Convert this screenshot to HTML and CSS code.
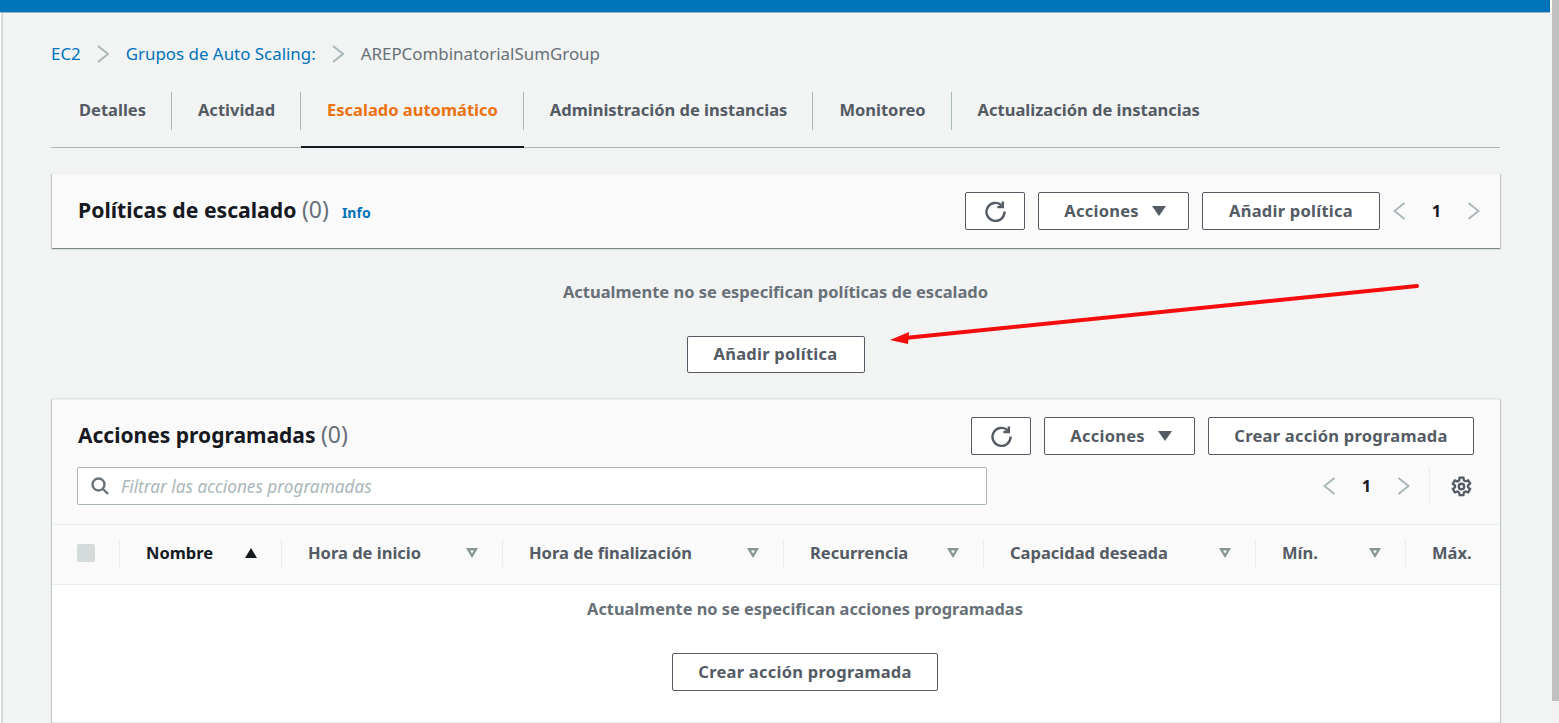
FILE: index.html
```html
<!DOCTYPE html>
<html lang="es">
<head>
    <meta charset="UTF-8">
    <title>AREPCombinatorialSumGroup</title>
    <link rel="stylesheet" href="styles.css">
</head>
<body>
    <div class="window">
        <div class="topbar"></div>
        <div class="page">
            <main class="content">
                <nav class="breadcrumb">
                    <a href="#">EC2</a>
                    <svg class="crumb-sep" viewBox="0 0 12 18"><path d="M1 1 11 9 1 17"/></svg>
                    <a href="#">Grupos de Auto Scaling:</a>
                    <svg class="crumb-sep" viewBox="0 0 12 18"><path d="M1 1 11 9 1 17"/></svg>
                    <span>AREPCombinatorialSumGroup</span>
                </nav>

                <ul class="tabs">
                    <li class="tab first">Detalles</li>
                    <li class="tab">Actividad</li>
                    <li class="tab active">Escalado automático</li>
                    <li class="tab">Administración de instancias</li>
                    <li class="tab">Monitoreo</li>
                    <li class="tab">Actualización de instancias</li>
                </ul>

                <!-- Politicas -->
                <section class="policy-panel">
                    <h2 class="panel-title">Políticas de escalado <span class="count">(0)</span></h2>
                    <a class="info" href="#">Info</a>
                    <div class="actions">
                        <button class="btn icon-btn">
                            <svg class="icon" viewBox="0 0 20 20"><path d="M16 4.2A8.6 8.6 0 1 0 18.6 10"/><path d="M17 .5v5.2h-5.2"/></svg>
                        </button>
                        <button class="btn dropdown-btn">Acciones <span class="caret"></span></button>
                        <button class="btn add-btn">Añadir política</button>
                        <div class="pager">
                            <svg class="page-arrow" viewBox="0 0 12 18"><path d="M11 1 1 9l10 8"/></svg>
                            <span class="page-num">1</span>
                            <svg class="page-arrow" viewBox="0 0 12 18"><path d="M1 1 11 9 1 17"/></svg>
                        </div>
                    </div>
                </section>
                <div class="empty policy-empty">
                    <p>Actualmente no se especifican políticas de escalado</p>
                    <button class="btn add-btn">Añadir política</button>
                </div>

                <!-- Acciones programadas -->
                <section class="table-panel">
                    <div class="table-head">
                        <div class="head-row">
                            <h2 class="panel-title">Acciones programadas <span class="count">(0)</span></h2>
                            <div class="actions">
                                <button class="btn icon-btn">
                                    <svg class="icon" viewBox="0 0 20 20"><path d="M16 4.2A8.6 8.6 0 1 0 18.6 10"/><path d="M17 .5v5.2h-5.2"/></svg>
                                </button>
                                <button class="btn dropdown-btn">Acciones <span class="caret"></span></button>
                                <button class="btn create-btn">Crear acción programada</button>
                            </div>
                        </div>
                        <div class="filter-row">
                            <div class="filter">
                                <svg class="search-icon" viewBox="0 0 18 18"><circle cx="7.5" cy="7.5" r="6"/><path d="m12 12 5 5"/></svg>
                                <input type="text" placeholder="Filtrar las acciones programadas">
                            </div>
                            <div class="pager table-pager">
                                <svg class="page-arrow" viewBox="0 0 12 18"><path d="M11 1 1 9l10 8"/></svg>
                                <span class="page-num">1</span>
                                <svg class="page-arrow" viewBox="0 0 12 18"><path d="M1 1 11 9 1 17"/></svg>
                            </div>
                            <div class="settings">
                                <svg class="gear" viewBox="0 0 20 20">
                                    <path d="M8.2 1.5h3.6l.5 2.6 1.6.9 2.5-.9 1.8 3.1-2 1.7v1.9l2 1.7-1.8 3.1-2.5-.9-1.6.9-.5 2.6H8.2l-.5-2.6-1.6-.9-2.5.9-1.8-3.1 2-1.7V9.1l-2-1.7 1.8-3.1 2.5.9 1.6-.9z"/>
                                    <circle cx="10" cy="10" r="2.6"/>
                                </svg>
                            </div>
                        </div>
                    </div>
                    <div class="columns">
                        <div class="col col-check"><span class="checkbox"></span></div>
                        <div class="col col-name">Nombre <span class="sort-up"></span></div>
                        <div class="col col-start">Hora de inicio <span class="sort-down"></span></div>
                        <div class="col col-end">Hora de finalización <span class="sort-down"></span></div>
                        <div class="col col-rec">Recurrencia <span class="sort-down"></span></div>
                        <div class="col col-cap">Capacidad deseada <span class="sort-down"></span></div>
                        <div class="col col-min">Mín. <span class="sort-down"></span></div>
                        <div class="col col-max">Máx.</div>
                    </div>
                    <div class="empty table-empty">
                        <p>Actualmente no se especifican acciones programadas</p>
                        <button class="btn create-btn">Crear acción programada</button>
                    </div>
                </section>
            </main>
        </div>
    </div>
    <div class="scrollbar"><div class="thumb"></div></div>

    <!-- flecha roja -->
    <svg class="annotation" viewBox="0 0 540 70">
        <path class="arrow-line" d="M527 3 15 55"/>
        <path class="arrow-head" d="M0 57 19 49 18 61z"/>
    </svg>
</body>
</html>
```
FILE: styles.css
```css
* {
    box-sizing: border-box;
}
html, body {
    height: 100%;
}
body {
    margin: 0;
    display: flex;
    font-family: "Noto Sans", Arial, sans-serif;
    font-size: 16.5px;
    color: #545b64;
    background-color: #fff;
    overflow: hidden;
}
.window {
    flex: 1;
    min-width: 0;
}
.topbar {
    height: 12.5px;
    margin-right: 2px;
    background-color: #0073bb;
    border-bottom: 1.5px solid #9fb2c0;
}
.page {
    height: 711px;
    margin-left: 1px;
    background-color: #f2f3f3;
    border-left: 2px solid #d5dbdb;
}
.content {
    padding: 29px 52px 0 48px;
}
a {
    color: #0073bb;
    text-decoration: none;
}

/* Scrollbar */
.scrollbar {
    width: 7px;
    flex: none;
    background-color: #f1f1f1;
}
.thumb {
    height: 701px;
    background-color: #c1c1c1;
}

/* Breadcrumb */
.breadcrumb {
    display: flex;
    align-items: center;
    height: 24px;
    font-size: 16.9px;
    color: #687078;
}
.crumb-sep {
    width: 12px;
    height: 18px;
    margin: 0 16.5px;
    fill: none;
    stroke: #aab7b8;
    stroke-width: 2;
}

/* Tabs */
.tabs {
    display: flex;
    list-style: none;
    margin: 26px 0 0;
    padding: 0;
    height: 56px;
    border-bottom: 1px solid #aab7b8;
}
.tab {
    position: relative;
    height: 56px;
    padding: 6px 26px 0;
    line-height: 24px;
    font-weight: 700;
    white-space: nowrap;
}
.tab::after {
    content: "";
    position: absolute;
    right: 0;
    top: 0;
    height: 38px;
    border-right: 1px solid #aab7b8;
}
.tab:last-child::after {
    display: none;
}
.tab.first {
    padding-left: 28px;
}
.tab.active {
    color: #ec7211;
    border-bottom: 2px solid #16191f;
}

/* Buttons */
.btn {
    height: 38px;
    padding: 0 26px 2px;
    background-color: #fff;
    border: 1px solid #545b64;
    border-radius: 2px;
    color: #545b64;
    font: 700 16.5px "Noto Sans", Arial, sans-serif;
    letter-spacing: .25px;
    white-space: nowrap;
}
.add-btn {
    width: 178px;
    padding: 0 0 2px;
}
.create-btn {
    width: 266px;
    padding: 0 0 2px;
}
.icon-btn {
    width: 60px;
    padding: 0;
    display: flex;
    align-items: center;
    justify-content: center;
}
.icon {
    width: 21px;
    height: 21px;
    fill: none;
    stroke: #545b64;
    stroke-width: 2.3;
}
.dropdown-btn {
    display: flex;
    align-items: center;
    gap: 13px;
    width: 151.5px;
    padding: 0 0 2px 25.5px;
}
.caret {
    width: 0;
    height: 0;
    margin-top: 2px;
    border-left: 7px solid transparent;
    border-right: 7px solid transparent;
    border-top: 10px solid #545b64;
}

/* Panels */
.policy-panel {
    display: flex;
    align-items: center;
    height: 75px;
    margin: 25.5px 0 0 1px;
    padding: 0 20px 0 25px;
    background-color: #fafafa;
    border-top: 1px solid #eaeded;
    box-shadow: 0 1px 1px 0 rgba(0, 28, 36, .3), 1px 1px 1px 0 rgba(0, 28, 36, .15), -1px 1px 1px 0 rgba(0, 28, 36, .15);
}
.panel-title {
    margin: 0 0 0 1px;
    padding-bottom: 4px;
    font-size: 21px;
    line-height: 28px;
    font-weight: 700;
    color: #16191f;
    white-space: nowrap;
}
.policy-panel .panel-title {
    font-size: 21.2px;
}
.count {
    font-size: 23px;
    font-weight: 400;
    color: #687078;
}
.info {
    margin: 2px 0 0 13px;
    font-size: 14px;
    font-weight: 700;
}
.actions {
    display: flex;
    align-items: center;
    gap: 12.75px;
    margin-left: auto;
}
.pager {
    display: flex;
    align-items: center;
    width: 87px;
    margin-left: .25px;
}
.page-arrow {
    width: 13px;
    height: 18px;
    flex: none;
    fill: none;
    stroke: #aab7b8;
    stroke-width: 2;
}
.page-num {
    flex: 1;
    padding-bottom: 2px;
    text-align: center;
    color: #16191f;
    font-weight: 700;
}
.empty {
    text-align: center;
    font-weight: 700;
    color: #687078;
}
.empty p {
    margin: 0;
    line-height: 24px;
}
.policy-empty {
    height: 151px;
    padding-top: 32px;
}
.policy-empty .btn {
    margin-top: 32px;
    height: 37px;
}

/* Tabla */
.table-panel {
    height: 324px;
    margin-left: 1px;
    background-color: #fff;
    border-top: 1px solid #eaeded;
    border-bottom: 1px solid #eaeded;
    box-shadow: 1px 0 1px 0 rgba(0, 28, 36, .2), -1px 0 1px 0 rgba(0, 28, 36, .2);
}
.table-head {
    height: 125px;
    padding: 17px 26px 0 25px;
    background-color: #fafafa;
    border-bottom: 1px solid #eaeded;
}
.head-row {
    display: flex;
    align-items: center;
    height: 38px;
}
.filter-row {
    display: flex;
    align-items: center;
    margin-top: 12px;
    height: 38px;
}
.filter {
    display: flex;
    align-items: center;
    width: 910px;
    height: 38px;
    padding-left: 13px;
    background-color: #fff;
    border: 1px solid #aab7b8;
    border-radius: 2px;
}
.search-icon {
    width: 18px;
    height: 18px;
    flex: none;
    fill: none;
    stroke: #687078;
    stroke-width: 2.4;
}
.filter input {
    flex: 1;
    margin-left: 12px;
    padding: 0;
    border: none;
    background: none;
    outline: none;
    font: italic 17.2px "Noto Sans", Arial, sans-serif;
}
.filter input::placeholder {
    color: #aab7b8;
    opacity: 1;
}
.table-pager {
    margin-left: auto;
}
.settings {
    display: flex;
    align-items: center;
    justify-content: flex-end;
    width: 45px;
    height: 38px;
    margin-left: 19px;
    border-left: 1px solid #eaeded;
}
.gear {
    width: 21px;
    height: 21px;
    margin-right: 2px;
    fill: none;
    stroke: #545b64;
    stroke-width: 2.2;
}
.columns {
    display: flex;
    height: 60px;
    padding-bottom: 3px;
    align-items: center;
    background-color: #fafafa;
    border-bottom: 1px solid #eaeded;
    font-weight: 700;
    white-space: nowrap;
}
.col {
    display: flex;
    align-items: center;
    justify-content: space-between;
    height: 28px;
    padding: 0 24px 1px 26px;
    border-right: 1px solid #eaeded;
}
.col-check {
    width: 68px;
    padding: 0 24px 0 25px;
}
.col-name { width: 162px; color: #16191f; }
.col-start { width: 221px; }
.col-end { width: 281px; }
.col-rec { width: 200px; }
.col-cap { width: 272px; }
.col-min { width: 150px; }
.col-max { border-right: none; flex: 1; }
.checkbox {
    width: 18px;
    height: 18px;
    background-color: #d5dbdb;
    border-radius: 2px;
}
.sort-up {
    width: 0;
    height: 0;
    margin-top: 1px;
    border-left: 6.5px solid transparent;
    border-right: 6.5px solid transparent;
    border-bottom: 10px solid #16191f;
}
.sort-down {
    width: 12px;
    height: 10px;
    margin-top: 1px;
    background-color: #879596;
    clip-path: polygon(evenodd, 0 0, 12px 0, 6px 10px, 0 0, 4px 2.5px, 8px 2.5px, 6px 5.5px, 4px 2.5px);
}
.table-empty {
    padding: 12px 0 0 58px;
}
.table-empty p {
    font-size: 16.35px;
}
.table-empty .btn {
    margin-top: 32px;
}

/* Flecha roja sobre la captura */
.annotation {
    position: absolute;
    left: 890px;
    top: 283px;
    width: 540px;
    height: 70px;
}
.arrow-line {
    fill: none;
    stroke: #f50d0d;
    stroke-width: 4;
    stroke-linecap: round;
}
.arrow-head {
    fill: #f50d0d;
}
```
